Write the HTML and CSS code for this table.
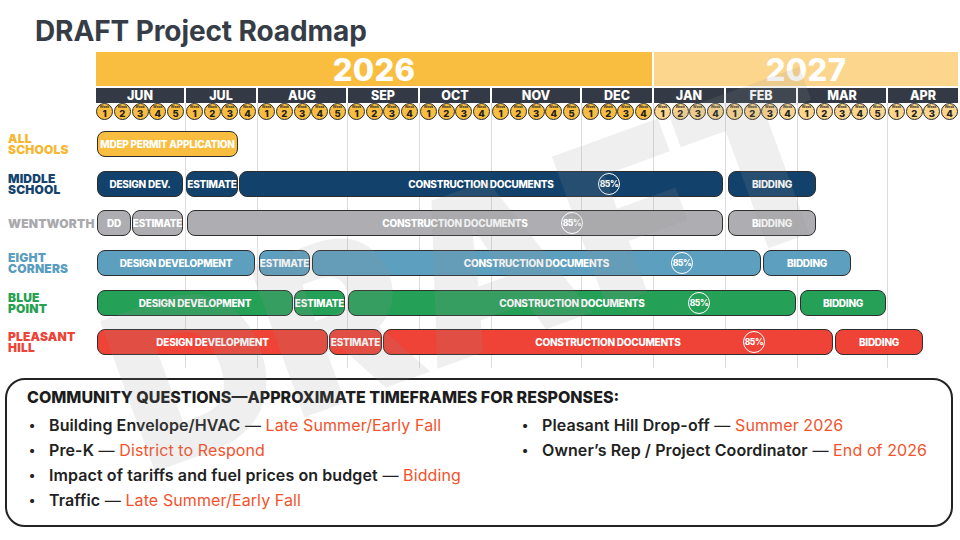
FILE: index.html
```html
<!DOCTYPE html>
<html lang="en">
<head>
<meta charset="utf-8">
<title>DRAFT Project Roadmap</title>
<link rel="stylesheet" href="styles.css">
</head>
<body>
<div class="page">
  <h1 class="title">DRAFT Project Roadmap</h1>

  <div class="chart">
    <div class="head">
      <div class="years">
        <div class="year y26">2026</div>
        <div class="year y27">2027</div>
      </div>
      <div class="months">
        <div class="month w5">JUN</div>
        <div class="month w4">JUL</div>
        <div class="month w5">AUG</div>
        <div class="month w4">SEP</div>
        <div class="month w4">OCT</div>
        <div class="month w5">NOV</div>
        <div class="month w4">DEC</div>
        <div class="month w4">JAN</div>
        <div class="month w4">FEB</div>
        <div class="month w5">MAR</div>
        <div class="month w4">APR</div>
      </div>
    </div>

    <div class="grid">
      <div class="lines">
        <div class="ln l5"></div><div class="ln l4"></div><div class="ln l5"></div><div class="ln l4"></div>
        <div class="ln l4"></div><div class="ln l5"></div><div class="ln l4"></div><div class="ln l4"></div>
        <div class="ln l4"></div><div class="ln l5"></div><div class="ln l4 last"></div>
      </div>

      <div class="weeks">
        <div class="wkgrp w5"><span class="wk"><small>Week</small><b>1</b></span><span class="wk"><small>Week</small><b>2</b></span><span class="wk"><small>Week</small><b>3</b></span><span class="wk"><small>Week</small><b>4</b></span><span class="wk"><small>Week</small><b>5</b></span></div>
        <div class="wkgrp w4"><span class="wk"><small>Week</small><b>1</b></span><span class="wk"><small>Week</small><b>2</b></span><span class="wk"><small>Week</small><b>3</b></span><span class="wk"><small>Week</small><b>4</b></span></div>
        <div class="wkgrp w5"><span class="wk"><small>Week</small><b>1</b></span><span class="wk"><small>Week</small><b>2</b></span><span class="wk"><small>Week</small><b>3</b></span><span class="wk"><small>Week</small><b>4</b></span><span class="wk"><small>Week</small><b>5</b></span></div>
        <div class="wkgrp w4"><span class="wk"><small>Week</small><b>1</b></span><span class="wk"><small>Week</small><b>2</b></span><span class="wk"><small>Week</small><b>3</b></span><span class="wk"><small>Week</small><b>4</b></span></div>
        <div class="wkgrp w4"><span class="wk"><small>Week</small><b>1</b></span><span class="wk"><small>Week</small><b>2</b></span><span class="wk"><small>Week</small><b>3</b></span><span class="wk"><small>Week</small><b>4</b></span></div>
        <div class="wkgrp w5"><span class="wk"><small>Week</small><b>1</b></span><span class="wk"><small>Week</small><b>2</b></span><span class="wk"><small>Week</small><b>3</b></span><span class="wk"><small>Week</small><b>4</b></span><span class="wk"><small>Week</small><b>5</b></span></div>
        <div class="wkgrp w4"><span class="wk"><small>Week</small><b>1</b></span><span class="wk"><small>Week</small><b>2</b></span><span class="wk"><small>Week</small><b>3</b></span><span class="wk"><small>Week</small><b>4</b></span></div>
        <div class="wkgrp w4 next"><span class="wk"><small>Week</small><b>1</b></span><span class="wk"><small>Week</small><b>2</b></span><span class="wk"><small>Week</small><b>3</b></span><span class="wk"><small>Week</small><b>4</b></span></div>
        <div class="wkgrp w4 next"><span class="wk"><small>Week</small><b>1</b></span><span class="wk"><small>Week</small><b>2</b></span><span class="wk"><small>Week</small><b>3</b></span><span class="wk"><small>Week</small><b>4</b></span></div>
        <div class="wkgrp w5 next"><span class="wk"><small>Week</small><b>1</b></span><span class="wk"><small>Week</small><b>2</b></span><span class="wk"><small>Week</small><b>3</b></span><span class="wk"><small>Week</small><b>4</b></span><span class="wk"><small>Week</small><b>5</b></span></div>
        <div class="wkgrp w4 next"><span class="wk"><small>Week</small><b>1</b></span><span class="wk"><small>Week</small><b>2</b></span><span class="wk"><small>Week</small><b>3</b></span><span class="wk"><small>Week</small><b>4</b></span></div>
      </div>

      <!-- ALL SCHOOLS -->
      <div class="label r1 c-all"><span>ALL</span><span>SCHOOLS</span></div>
      <div class="track r1">
        <div class="bar b-all" style="margin-left:1px;width:141px">MDEP PERMIT APPLICATION</div>
      </div>

      <!-- MIDDLE SCHOOL -->
      <div class="label r2 c-ms"><span>MIDDLE</span><span>SCHOOL</span></div>
      <div class="track r2">
        <div class="bar b-ms" style="margin-left:1px;width:86px">DESIGN DEV.</div>
        <div class="bar b-ms" style="margin-left:3px;width:52px">ESTIMATE</div>
        <div class="bar b-ms" style="margin-left:1px;width:484px">CONSTRUCTION DOCUMENTS<span class="pct" style="left:358px">85%</span></div>
        <div class="bar b-ms" style="margin-left:5px;width:88px">BIDDING</div>
      </div>

      <!-- WENTWORTH -->
      <div class="label r3 c-ww"><span>WENTWORTH</span></div>
      <div class="track r3">
        <div class="bar b-ww" style="margin-left:1px;width:34px">DD</div>
        <div class="bar b-ww" style="margin-left:1px;width:51px">ESTIMATE</div>
        <div class="bar b-ww" style="margin-left:4px;width:536px">CONSTRUCTION DOCUMENTS<span class="pct" style="left:373px">85%</span></div>
        <div class="bar b-ww" style="margin-left:5px;width:88px">BIDDING</div>
      </div>

      <!-- EIGHT CORNERS -->
      <div class="label r4 c-ec"><span>EIGHT</span><span>CORNERS</span></div>
      <div class="track r4">
        <div class="bar b-ec" style="margin-left:1px;width:158px">DESIGN DEVELOPMENT</div>
        <div class="bar b-ec" style="margin-left:4px;width:51px">ESTIMATE</div>
        <div class="bar b-ec" style="margin-left:2px;width:449px">CONSTRUCTION DOCUMENTS<span class="pct" style="left:358px">85%</span></div>
        <div class="bar b-ec" style="margin-left:2px;width:88px">BIDDING</div>
      </div>

      <!-- BLUE POINT -->
      <div class="label r5 c-bp"><span>BLUE</span><span>POINT</span></div>
      <div class="track r5">
        <div class="bar b-bp" style="margin-left:1px;width:196px">DESIGN DEVELOPMENT</div>
        <div class="bar b-bp" style="margin-left:1px;width:51px">ESTIMATE</div>
        <div class="bar b-bp" style="margin-left:3px;width:448px">CONSTRUCTION DOCUMENTS<span class="pct" style="left:339px">85%</span></div>
        <div class="bar b-bp" style="margin-left:4px;width:86px">BIDDING</div>
      </div>

      <!-- PLEASANT HILL -->
      <div class="label r6 c-ph"><span>PLEASANT</span><span>HILL</span></div>
      <div class="track r6">
        <div class="bar b-ph" style="margin-left:1px;width:231px">DESIGN DEVELOPMENT</div>
        <div class="bar b-ph" style="margin-left:1px;width:53px">ESTIMATE</div>
        <div class="bar b-ph" style="margin-left:1px;width:450px">CONSTRUCTION DOCUMENTS<span class="pct" style="left:359px">85%</span></div>
        <div class="bar b-ph" style="margin-left:2px;width:88px">BIDDING</div>
      </div>
    </div>
  </div>

  <div class="qbox">
    <h2 class="qhead">COMMUNITY QUESTIONS—APPROXIMATE TIMEFRAMES FOR RESPONSES:</h2>
    <div class="qcols">
      <ul class="qlist">
        <li><span class="q">Building Envelope/HVAC</span> — <span class="a">Late Summer/Early Fall</span></li>
        <li><span class="q">Pre-K</span> — <span class="a">District to Respond</span></li>
        <li><span class="q">Impact of tariffs and fuel prices on budget</span> — <span class="a">Bidding</span></li>
        <li><span class="q">Traffic</span> — <span class="a">Late Summer/Early Fall</span></li>
      </ul>
      <ul class="qlist">
        <li><span class="q">Pleasant Hill Drop-off</span> — <span class="a">Summer 2026</span></li>
        <li><span class="q">Owner’s Rep / Project Coordinator</span> — <span class="a">End of 2026</span></li>
      </ul>
    </div>
  </div>

  <div class="watermark">DRAFT</div>
</div>
</body>
</html>
```

FILE: styles.css
```css
html, body {
  margin: 0;
  padding: 0;
  background: #ffffff;
}

body {
  width: 960px;
  height: 540px;
  overflow: hidden;
  font-family: "Inter", "Liberation Sans", sans-serif;
  color: #222;
}

.page {
  position: relative;
  width: 960px;
  height: 540px;
  overflow: hidden;
}

.title {
  margin: 0;
  height: 36px;
  padding: 16px 0 0 35px;
  font-size: 28px;
  line-height: 31px;
  font-weight: 700;
  color: #363d47;
  letter-spacing: -0.1px;
}

/* ---------- timeline header ---------- */
.head {
  margin-left: 96px;
}

.years {
  display: flex;
  gap: 2px;
  height: 34px;
  margin-bottom: 2px;
}

.year {
  display: flex;
  align-items: center;
  justify-content: center;
  color: #fff;
  font-weight: 800;
  font-size: 31px;
  letter-spacing: 0.3px;
}

.y26 { width: 556px; background: #f9be40; }
.y27 { width: 304px; background: #fcd68c; }

.months {
  display: flex;
  gap: 2px;
  height: 15px;
}

.month {
  background: #333a45;
  color: #fff;
  font-weight: 800;
  font-size: 12.5px;
  line-height: 15px;
  text-align: center;
}

.w5 { width: 88px; }
.w4 { width: 70px; }

/* ---------- grid body ---------- */
.grid {
  display: grid;
  grid-template-columns: 96px 864px;
  grid-template-rows: 18px repeat(6, 39.7px) 9px;
}

.lines {
  grid-column: 2;
  grid-row: 1 / 9;
  display: flex;
}

.ln {
  box-sizing: border-box;
  border-right: 1px solid #dcdcdc;
}
.ln.last { border-right-color: transparent; }
.l5 { width: 90px; }
.l4 { width: 72px; }

.weeks {
  grid-column: 2;
  grid-row: 1;
  display: flex;
  gap: 2px;
}

.wkgrp {
  display: flex;
  justify-content: space-between;
  height: 17px;
}

.wk {
  box-sizing: border-box;
  width: 17px;
  height: 17px;
  border-radius: 50%;
  border: 1.2px solid #2b2b2b;
  background: #f9be40;
  display: flex;
  flex-direction: column;
  align-items: center;
  justify-content: center;
  color: #222;
}

.next .wk { background: #fcd68c; }

.wk small {
  font-size: 3.5px;
  line-height: 3.5px;
  font-weight: 600;
  margin-top: 1px;
}

.wk b {
  font-size: 9.5px;
  line-height: 8.5px;
  font-weight: 800;
}

.r1 { grid-row: 2; }
.r2 { grid-row: 3; }
.r3 { grid-row: 4; }
.r4 { grid-row: 5; }
.r5 { grid-row: 6; }
.r6 { grid-row: 7; }

.label {
  grid-column: 1;
  display: flex;
  flex-direction: column;
  justify-content: center;
  box-sizing: border-box;
  padding: 6px 0 0 8px;
  font-weight: 900;
  font-size: 12px;
  letter-spacing: 0.2px;
}

.label span {
  display: block;
  height: 11px;
  line-height: 11px;
}

.c-all { color: #f6b733; }
.c-ms { color: #15436d; }
.c-ww { color: #a9a9ad; }
.c-ec { color: #5b9dc0; }
.c-bp { color: #27a052; }
.c-ph { color: #ee4236; }

.track {
  grid-column: 2;
  display: flex;
  align-items: flex-start;
  padding-top: 10px;
}

.bar {
  position: relative;
  flex: none;
  box-sizing: border-box;
  height: 26px;
  border: 1.5px solid #2e2e2e;
  border-radius: 8px;
  display: flex;
  align-items: center;
  justify-content: center;
  color: #fff;
  font-weight: 800;
  font-size: 10px;
  letter-spacing: -0.25px;
  white-space: nowrap;
}

.b-all { background: #f9be40; }
.b-ms { background: #12426c; }
.b-ww { background: #aeaeb2; }
.b-ec { background: #5d9fbf; }
.b-bp { background: #25a057; }
.b-ph { background: #ef4337; }

.pct {
  position: absolute;
  top: 50%;
  transform: translateY(-50%);
  box-sizing: border-box;
  width: 22px;
  height: 22px;
  border: 1.5px solid #fff;
  border-radius: 50%;
  display: flex;
  align-items: center;
  justify-content: center;
  font-size: 8.5px;
  font-weight: 800;
  letter-spacing: -0.4px;
}

/* ---------- questions box ---------- */
.qbox {
  box-sizing: border-box;
  margin: 10px 7px 0 5px;
  height: 149px;
  border: 2px solid #232323;
  border-radius: 20px;
  padding: 7px 0 0 20px;
}

.qhead {
  margin: 0;
  font-size: 16px;
  line-height: 20px;
  font-weight: 800;
  letter-spacing: 0;
  color: #1c1c1c;
}

.qcols {
  display: grid;
  grid-template-columns: 493px 1fr;
  margin-top: 6px;
}

.qlist {
  margin: 0;
  padding: 0;
  list-style: none;
}

.qlist li {
  display: flex;
  font-size: 16px;
  line-height: 25px;
  color: #222;
  white-space: pre;
  letter-spacing: 0.1px;
}

.qlist li::before {
  content: "•";
  width: 20px;
  padding-left: 2px;
  flex: none;
  font-size: 13px;
  font-weight: 700;
}

.q {
  font-weight: 600;
  color: #222;
}

.a {
  color: #f4522b;
}

/* ---------- watermark ---------- */
.watermark {
  position: absolute;
  left: 95px;
  top: 160px;
  font-size: 220px;
  line-height: 1;
  font-weight: 900;
  color: rgba(150, 150, 150, 0.15);
  transform: rotate(-20deg);
  pointer-events: none;
  white-space: nowrap;
}
```
